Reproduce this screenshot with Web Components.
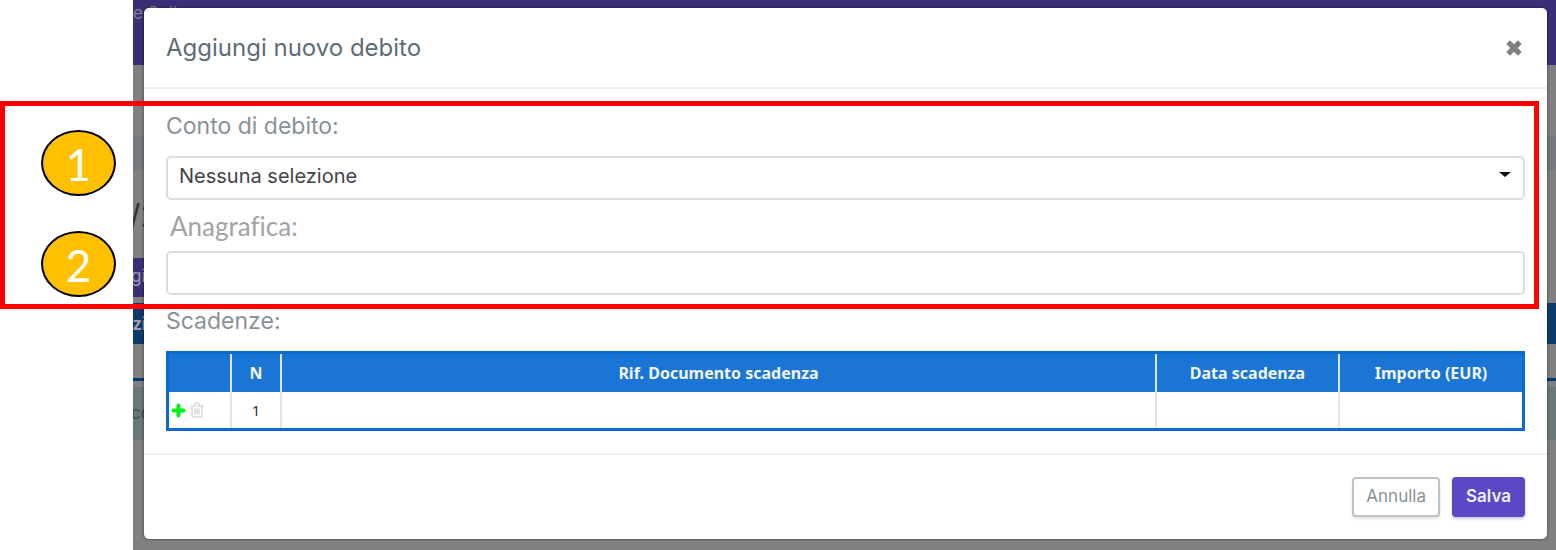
<!DOCTYPE html>
<html lang="it">
<head>
<meta charset="utf-8">
<title>Aggiungi nuovo debito</title>
<style>
  body {
    margin: 0;
    background: #fff;
    font-family: Inter, "Open Sans", sans-serif;
  }
</style>
</head>
<body>
<guide-figure>
  <page-behind slot="screen"></page-behind>
  <modal-dialog slot="screen" heading="Aggiungi nuovo debito">
    <form-field label="Conto di debito:" type="select" value="Nessuna selezione"></form-field>
    <form-field label="Anagrafica:" type="text" class="compact"></form-field>
    <due-table label="Scadenze:"></due-table>
    <action-button slot="footer" kind="outline">Annulla</action-button>
    <action-button slot="footer" kind="primary">Salva</action-button>
  </modal-dialog>
  <step-badge slot="badge">1</step-badge>
  <step-badge slot="badge">2</step-badge>
</guide-figure>

<script>
(function () {
  function attach(element, html) {
    const template = document.createElement('template');
    template.innerHTML = html;
    element.attachShadow({mode: 'open'});
    element.shadowRoot.appendChild(template.content.cloneNode(true));
  }

  // screen on the right, numbered frame laid over it
  class GuideFigure extends HTMLElement {
    constructor() {
      super();
      attach(this, `
        <style>
          :host {
            display: block;
            position: relative;
            padding-left: 133px;
            overflow: hidden;
          }
          .screen {
            position: relative;
            min-height: 100vh;
            overflow: hidden;
            background: #808080;
          }
          .frame {
            position: absolute;
            top: 101px;
            left: 0;
            right: 17px;
            height: 208px;
            box-sizing: border-box;
            border: 5px solid #f00;
            padding: 24px 0 0 36px;
            display: flex;
            flex-direction: column;
            gap: 35px;
            pointer-events: none;
          }
        </style>
        <div class="screen"><slot name="screen"></slot></div>
        <div class="frame"><slot name="badge"></slot></div>
      `);
    }
  }

  class StepBadge extends HTMLElement {
    constructor() {
      super();
      attach(this, `
        <style>
          :host {
            display: block;
            box-sizing: border-box;
            width: 75px;
            height: 66px;
            border: 2px solid #000;
            border-radius: 50%;
            background: #ffc000;
            color: #fff;
            font: 44px/64px Lato, sans-serif;
            text-align: center;
          }
        </style>
        <slot></slot>
      `);
    }
  }

  class PageBehind extends HTMLElement {
    constructor() {
      super();
      attach(this, `
        <style>
          :host {
            position: absolute;
            inset: 0;
            display: block;
            overflow: hidden;
            white-space: nowrap;
            color: #a09daf;
            font-size: 17px;
          }
          .nav {
            height: 65px;
            line-height: 26px;
            color: #85808c;
            background: #3b2e77;
          }
          .crumbs {
            height: 34px;
            margin-top: 71px;
            background: #73797d;
          }
          .title {
            height: 88px;
            line-height: 92px;
            font-size: 32px;
            text-indent: -4px;
            color: #343434;
          }
          .add {
            width: 90px;
            height: 39px;
            line-height: 36px;
            text-indent: -2px;
            background: #3b2e77;
          }
          .head {
            height: 41px;
            margin-top: 6px;
            line-height: 41px;
            font-family: "Noto Sans", sans-serif;
            font-weight: 700;
            background: #0c3b6b;
          }
          .row {
            height: 34px;
            border-bottom: 3px solid #063872;
          }
          .total {
            height: 53px;
            margin-top: 6px;
            line-height: 53px;
            text-indent: -2px;
            color: #3d4c4c;
            background: #687778;
          }
        </style>
        <div class="nav">e Soll</div>
        <div class="crumbs"></div>
        <div class="title">/2</div>
        <div class="add">giu</div>
        <div class="head">zi</div>
        <div class="row"></div>
        <div class="total">co</div>
      `);
    }
  }

  class ModalDialog extends HTMLElement {
    constructor() {
      super();
      attach(this, `
        <style>
          :host {
            position: relative;
            display: block;
            margin: 8px 9px 11px 11px;
            border-radius: 5px;
            background: #fff;
            box-shadow: 0 0 3px rgba(0, 0, 0, 0.6);
          }
          header {
            display: flex;
            align-items: center;
            justify-content: space-between;
            height: 81px;
            box-sizing: border-box;
            padding: 0 22px;
            border-bottom: 2px solid #edf0f3;
          }
          h2 {
            margin: 0;
            font-size: 24px;
            font-weight: 400;
            line-height: 36px;
            color: #5c6d76;
          }
          .close {
            display: flex;
            padding: 2px;
            border: 0;
            background: none;
          }
          .body {
            padding: 19px 22px 22px;
          }
          footer {
            display: flex;
            justify-content: flex-end;
            gap: 12px;
            padding: 22px;
            border-top: 2px solid #f0f1f3;
          }
        </style>
        <header>
          <h2></h2>
          <button class="close" type="button" aria-label="Chiudi">
            <svg width="18" height="18" viewBox="0 0 17 17">
              <path d="M3 3L14 14M14 3L3 14" stroke="#808080" stroke-width="5"/>
            </svg>
          </button>
        </header>
        <div class="body"><slot></slot></div>
        <footer><slot name="footer"></slot></footer>
      `);
      this.shadowRoot.querySelector('h2').textContent = this.getAttribute('heading');
    }
  }

  class FormField extends HTMLElement {
    constructor() {
      super();
      const value = this.getAttribute('value') || '';
      const control = this.getAttribute('type') === 'select'
        ? `<select id="control"><option>${value}</option></select>
           <svg width="12" height="6" viewBox="0 0 12 6"><path d="M0 0H12L6 5Z" fill="#111"/></svg>`
        : '<input id="control" type="text">';
      attach(this, `
        <style>
          :host {
            display: block;
            margin-bottom: 8px;
          }
          label {
            display: block;
            margin-bottom: 12px;
            font-size: 23px;
            line-height: 36px;
            color: #879298;
          }
          :host(.compact) label {
            margin-bottom: 7px;
            padding-left: 4px;
            font-family: Lato, sans-serif;
            font-size: 26px;
            font-variant-ligatures: none;
            color: #a3a3a3;
          }
          .box {
            position: relative;
          }
          select, input {
            display: block;
            box-sizing: border-box;
            width: 100%;
            height: 44px;
            padding: 0 12px 4px 11px;
            border: 2px solid #d9dee3;
            border-radius: 5px;
            appearance: none;
            background: #fff;
            color: #404448;
            font: inherit;
            font-size: 20px;
          }
          svg {
            position: absolute;
            top: 16px;
            right: 14px;
            pointer-events: none;
          }
        </style>
        <label for="control"></label>
        <div class="box">${control}</div>
      `);
      this.shadowRoot.querySelector('label').textContent = this.getAttribute('label');
    }
  }

  class DueTable extends HTMLElement {
    constructor() {
      super();
      attach(this, `
        <style>
          :host {
            display: block;
          }
          .caption {
            margin-bottom: 12px;
            font-size: 23px;
            line-height: 36px;
            color: #879298;
          }
          table {
            width: 100%;
            table-layout: fixed;
            border-collapse: separate;
            border-spacing: 0;
            border: 3px solid #0c6bd0;
            font-family: "Noto Sans", sans-serif;
            font-size: 15px;
          }
          th, td {
            box-sizing: border-box;
            height: 36px;
            padding: 0;
            border-right: 2px solid #e3e3e3;
            text-align: center;
            color: #333;
          }
          th {
            height: 38px;
            background: #1a75d5;
            color: #f2f7fd;
            font-size: 16px;
            font-weight: 700;
          }
          th:last-child, td:last-child {
            border-right: 0;
          }
          .tools { width: 63px; }
          .number { width: 50px; }
          .date { width: 183px; }
          .amount { width: 182px; }
          .icons {
            display: flex;
            align-items: center;
            gap: 4px;
            padding-left: 2px;
          }
          button {
            display: flex;
            padding: 0;
            border: 0;
            background: none;
          }
        </style>
        <div class="caption" id="caption"></div>
        <table aria-labelledby="caption">
          <colgroup>
            <col class="tools"><col class="number"><col><col class="date"><col class="amount">
          </colgroup>
          <thead>
            <tr><th></th><th>N</th><th>Rif. Documento scadenza</th><th>Data scadenza</th><th>Importo (EUR)</th></tr>
          </thead>
          <tbody>
            <tr>
              <td>
                <div class="icons">
                  <button type="button" aria-label="Aggiungi riga">
                    <svg width="15" height="15" viewBox="0 0 15 15">
                      <path d="M7.5 2.5V12.500M2.500 7.500H12.500" stroke="#00f318" stroke-width="4" stroke-linecap="round"/>
                    </svg>
                  </button>
                  <button type="button" aria-label="Elimina riga">
                    <svg width="14" height="16" viewBox="0 0 14 16" fill="none" stroke="#d0d0d0" stroke-width="1.200">
                      <path d="M0.500 4H13.500M4 4L5 1H9L10 4M2 4V14Q2 15 3 15H11Q12 15 12 14V4M5 6.500V12.500M7 6.500V12.500M9 6.500V12.500"/>
                    </svg>
                  </button>
                </div>
              </td>
              <td>1</td><td></td><td></td><td></td>
            </tr>
          </tbody>
        </table>
      `);
      this.shadowRoot.querySelector('.caption').textContent = this.getAttribute('label');
    }
  }

  class ActionButton extends HTMLElement {
    constructor() {
      super();
      attach(this, `
        <style>
          :host {
            display: block;
          }
          button {
            display: block;
            box-sizing: border-box;
            height: 40px;
            padding: 0 12px 3px;
            border: 2px solid #bcc2c5;
            border-radius: 4px;
            background: #fff;
            box-shadow: 0 2px 3px rgba(0, 0, 0, 0.12);
            color: #879298;
            font: inherit;
            font-size: 17px;
          }
          :host([kind="primary"]) button {
            border-color: #5a48c5;
            background: #5a48c5;
            box-shadow: 0 2px 3px rgba(90, 72, 197, 0.3);
            color: #f1effb;
            font-weight: 600;
          }
        </style>
        <button type="button"><slot></slot></button>
      `);
    }
  }

  window.customElements.define('guide-figure', GuideFigure);
  window.customElements.define('step-badge', StepBadge);
  window.customElements.define('page-behind', PageBehind);
  window.customElements.define('modal-dialog', ModalDialog);
  window.customElements.define('form-field', FormField);
  window.customElements.define('due-table', DueTable);
  window.customElements.define('action-button', ActionButton);
})();
</script>
</body>
</html>
